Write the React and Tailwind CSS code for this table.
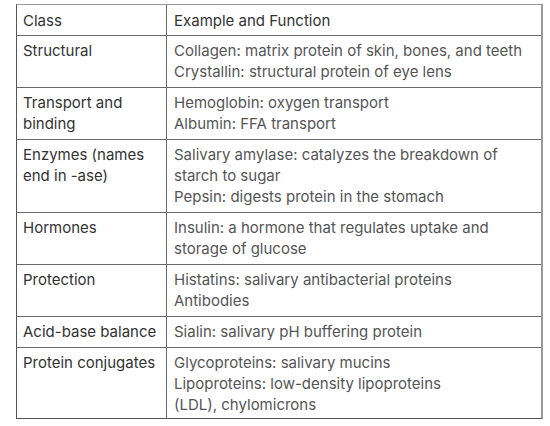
import React from "react";

const rows = [
  { c: ["Structural"], e: ["Collagen: matrix protein of skin, bones, and teeth", "Crystallin: structural protein of eye lens"] },
  { c: ["Transport and", "binding"], e: ["Hemoglobin: oxygen transport", "Albumin: FFA transport"] },
  { c: ["Enzymes (names", "end in -ase)"], e: ["Salivary amylase: catalyzes the breakdown of", "starch to sugar", "Pepsin: digests protein in the stomach"] },
  { c: ["Hormones"], e: ["Insulin: a hormone that regulates uptake and", "storage of glucose"] },
  { c: ["Protection"], e: ["Histatins: salivary antibacterial proteins", "Antibodies"] },
  { c: ["Acid-base balance"], e: ["Sialin: salivary pH buffering protein"] },
  { c: ["Protein conjugates"], e: ["Glycoproteins: salivary mucins", "Lipoproteins: low-density lipoproteins", "(LDL), chylomicrons"] },
];

function Row({ c, e, last }) {
  return (
    <div className={`grid grid-cols-[150px_1fr] ${last ? "" : "border-b border-[#6a6a6a]"}`}>
      <div className={`border-r border-[#6a6a6a] pl-[6px] pt-[4px] ${last ? "pb-[3px]" : "pb-[5px]"} text-[#333]`}>
        {c.map((t, i) => (
          <div key={i}>{t}</div>
        ))}
      </div>
      <div className={`pl-[7px] pt-[4px] ${last ? "pb-[3px]" : "pb-[5px]"} text-[#555]`}>
        {e.map((t, i) => (
          <div key={i}>{t}</div>
        ))}
      </div>
    </div>
  );
}

export default function App() {
  return (
    <div className="w-[550px] h-[426px] bg-white pt-[4px] pl-[16px]" style={{ fontFamily: 'Inter, "Liberation Sans", sans-serif' }}>
      <div className="w-[527px] border-l border-b border-[#555] border-t border-t-[#999] border-r-2 border-r-[#999] text-[15px] leading-[21px]">
        <div className="grid grid-cols-[150px_1fr] border-b border-[#6a6a6a]">
          <div className="border-r border-[#6a6a6a] pl-[6px] pt-[5px] pb-[4px] text-[#333]">Class</div>
          <div className="pl-[7px] pt-[5px] pb-[4px] text-[#333]">Example and Function</div>
        </div>
        {rows.map((r, i) => (
          <Row key={i} c={r.c} e={r.e} last={i === rows.length - 1} />
        ))}
      </div>
    </div>
  );
}
